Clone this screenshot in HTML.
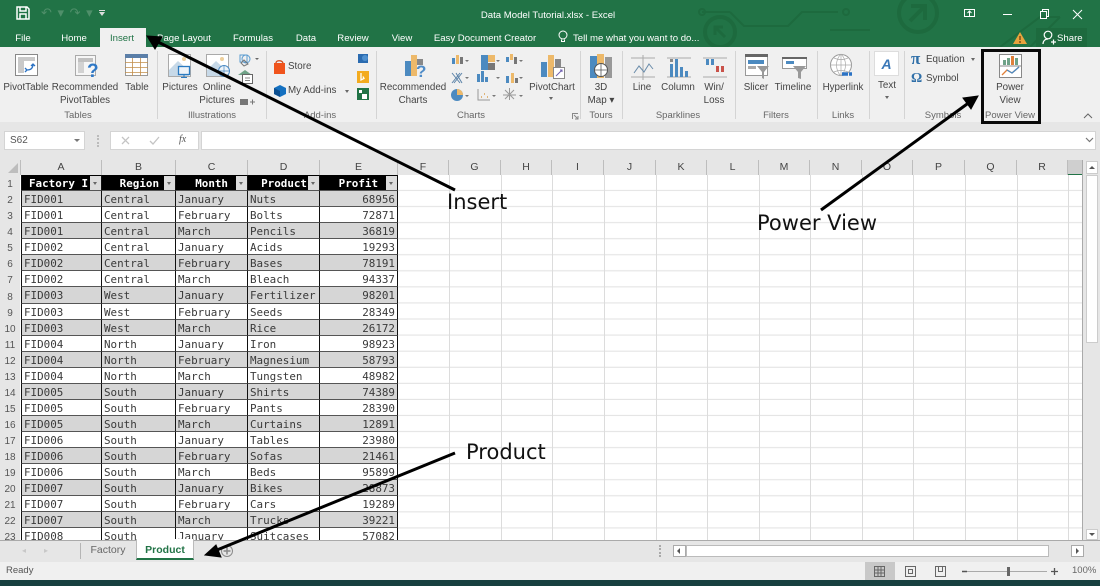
<!DOCTYPE html>
<html><head><meta charset="utf-8"><style>
html,body{margin:0;padding:0;width:1100px;height:586px;overflow:hidden;background:#fff}
body{position:relative;font-family:"Liberation Sans",sans-serif;font-size:9.8px;color:#444}
.a{position:absolute}
.t{position:absolute;transform:translateX(-50%);white-space:nowrap;line-height:13px;text-align:center}
.g{position:absolute;top:110px;transform:translateX(-50%);white-space:nowrap;line-height:12px;color:#666;font-size:9.5px}
.w{color:#fff;font-size:9.6px;line-height:13px;top:32px}
.sep{position:absolute;top:51px;height:68px;width:1px;background:#d4d4d4}
.col{position:absolute;top:160px;height:15px;line-height:15px;text-align:center;color:#444;font-size:10.5px;background:#e6e6e6;border-right:1px solid #bdbdbd;box-sizing:border-box}
.rh{position:absolute;left:0;width:20px;text-align:center;color:#555;font-size:10px;height:16px;line-height:19px}
.grid{position:absolute;left:21px;top:175px;width:378px;height:365px;overflow:hidden}
.gi{display:grid;grid-template-columns:81px 74px 72px 72px 78px;grid-auto-rows:16.07px;font-family:"DejaVu Sans Mono",monospace;font-size:10.9px;color:#3a3a3a}
.r{display:contents}
.r>span{display:block;border-right:1px solid #111;border-bottom:1px solid #555;box-sizing:border-box;padding-left:2px;line-height:18px;white-space:nowrap;overflow:hidden;background:#fff}
.r:nth-child(even)>span{background:#d6d6d6}
.r>span:first-child{border-left:1px solid #111}
.r>span:last-child{text-align:right;padding-right:2px}
.h>span{background:#000!important;color:#fff;font-weight:bold;position:relative;text-align:right;padding:0!important;font-size:10.9px;line-height:17px}
.h>span:nth-child(1){padding-right:13px!important}
.h>span:nth-child(2){padding-right:16px!important}
.h>span:nth-child(3){padding-right:19px!important}
.h>span:nth-child(4){padding-right:12px!important}
.h>span:nth-child(5){padding-right:19px!important;text-align:right}
.h>span i{position:absolute;right:0;top:1px;width:11px;height:14px;background:#dcdcdc}
.h>span i:after{content:"";position:absolute;left:3px;top:6px;border:2.500px solid transparent;border-top:3px solid #666;border-bottom:0}
</style></head><body>
<div class="a" style="left:0;top:0;width:1100px;height:47px;background:#217346"></div>
<svg class="a" style="left:0;top:0" width="1100" height="47" fill="none" stroke="#1d6a3e" stroke-width="2">
<circle cx="918" cy="13" r="19" stroke-width="4"/><path d="M910 21l15-15M911 6h14v14" stroke-width="4"/>
<circle cx="720" cy="32" r="15" stroke-width="4"/><path d="M715 27l10 10M715 35v-8h8" stroke-width="3"/>
<path d="M702 12h28M730 12l14 14h44l14-14h36M830 30h40M1000 47l40-30h20M1030 47l30-30"/><circle cx="702" cy="12" r="3"/><circle cx="846" cy="12" r="3"/>
</svg>
<svg class="a" style="left:16px;top:6px" width="14" height="14" fill="none" stroke="#fff" stroke-width="1.500"><path d="M1 1h10l2 2v10H1zM4 1v4h6V1M4 13V8h6v5"/></svg>
<div class="a" style="left:41px;top:5px;color:#4f8f6a;font-size:13px;line-height:15px;letter-spacing:1px">↶ ▾ ↷ ▾</div>
<div class="a" style="left:99px;top:10px;width:6px;height:1px;background:#ddd"></div>
<div class="a" style="left:99px;top:12px;border:3px solid transparent;border-top:4px solid #ddd;border-bottom:0"></div>
<div class="t" style="left:548px;top:9px;color:#fff;font-size:9.6px">Data Model Tutorial.xlsx - Excel</div>
<svg class="a" style="left:960px;top:6px" width="130" height="16" fill="none" stroke="#fff"><rect x="4.500" y="3.500" width="10" height="7"/><path d="M9.500 10V5M7.500 7l2-2 2 2"/><path d="M43 8.500h9"/><rect x="80.500" y="5.500" width="6" height="7"/><path d="M82.500 5V3.500h6v7H87M113 4l9 9M122 4l-9 9"/></svg>

<div class="a" style="left:100px;top:28px;width:46px;height:20px;background:#f0f0f0"></div>
<div class="t w" style="left:23px">File</div>
<div class="t w" style="left:74px">Home</div>
<div class="t w" style="left:122px;color:#217346">Insert</div>
<div class="t w" style="left:184px">Page Layout</div>
<div class="t w" style="left:253px">Formulas</div>
<div class="t w" style="left:306px">Data</div>
<div class="t w" style="left:353px">Review</div>
<div class="t w" style="left:402px">View</div>
<div class="t w" style="left:485px">Easy Document Creator</div>
<svg class="a" style="left:557px;top:30px" width="12" height="14" fill="none" stroke="#fff"><circle cx="6" cy="5" r="4"/><path d="M4.500 9.500v2h3v-2"/></svg>
<div class="a w" style="left:573px;white-space:nowrap">Tell me what you want to do...</div>
<svg class="a" style="left:1013px;top:32px" width="14" height="12"><path d="M7 0l7 12H0z" fill="#e8a33d"/><path d="M7 4v4M7 9v2" stroke="#5a3a10" stroke-width="1.200"/></svg>
<div class="a" style="left:1036px;top:28px;width:51px;height:19px;background:#1d6a3e"></div>
<svg class="a" style="left:1042px;top:30px" width="14" height="15" fill="none" stroke="#fff" stroke-width="1.200"><circle cx="6" cy="5" r="3.800"/><path d="M1 14c0-3 2-5 5-5M9 12h5M11.500 9.500v5"/></svg>
<div class="a w" style="left:1057px;white-space:nowrap">Share</div>

<div class="a" style="left:0;top:47px;width:1100px;height:75px;background:#f0f0f0"></div>
<div class="a" style="left:0;top:122px;width:1100px;height:38px;background:#e6e6e6"></div>
<div class="sep" style="left:157px"></div><div class="sep" style="left:266px"></div><div class="sep" style="left:376px"></div><div class="sep" style="left:580px"></div><div class="sep" style="left:622px"></div><div class="sep" style="left:735px"></div><div class="sep" style="left:817px"></div><div class="sep" style="left:869px"></div><div class="sep" style="left:904px"></div>

<svg class="a" style="left:0;top:47px" width="1100" height="62" fill="none">
<rect x="15.500" y="7.500" width="22" height="21" fill="#fff" stroke="#888"/><rect x="18" y="10" width="6" height="16" fill="#c9c9c9"/><rect x="18" y="10" width="17" height="4" fill="#c9c9c9"/><path d="M27 23c4 0 6-2 6-6M25 21l2 2-2 2M31 19l2-2 2 2" stroke="#2b72c4" stroke-width="1.300"/>
<rect x="75.500" y="8.500" width="20" height="20" fill="#f6f6f6" stroke="#aaa"/><rect x="78" y="11" width="6" height="15" fill="#d2d2d2"/><rect x="78" y="11" width="15" height="4" fill="#c0c0c0"/><text x="87" y="30" font-family="Liberation Sans" font-size="19" font-weight="bold" fill="#2f78c6">?</text>
<rect x="125.500" y="7.500" width="22" height="21" fill="#fff" stroke="#999"/><rect x="125" y="7" width="23" height="4" fill="#5b7fa8"/><path d="M125 15.500h23M125 20.500h23M125 25.500h23M132.500 11v18M140.500 11v18" stroke="#c28e4a" stroke-width=".8"/>
<rect x="168.500" y="7.500" width="22" height="22" fill="#fff" stroke="#aaa"/><path d="M169 29v-6l9-9 11 10v5z" fill="#c7d9e8"/><circle cx="184" cy="12" r="2" fill="#edcf9c"/><rect x="178.500" y="19.500" width="11" height="8" fill="#eef3f8" stroke="#2a7ac0" stroke-width="1.300"/><path d="M184 28v2M181 30.500h6" stroke="#2a7ac0"/>
<rect x="206.500" y="7.500" width="22" height="22" fill="#fff" stroke="#aaa"/><path d="M207 29v-6l9-9 11 10v5z" fill="#c7d9e8"/><circle cx="222" cy="12" r="2" fill="#edcf9c"/><circle cx="224" cy="24" r="5.500" fill="#eef3f8" stroke="#4a8ac4"/><path d="M218.500 24h11M224 18.500v11" stroke="#4a8ac4" stroke-width=".7"/>
<rect x="240" y="8" width="7" height="7" stroke="#5a9bd0"/><circle cx="246" cy="12" r="4" stroke="#5a9bd0"/><path d="M244 13l4 4-4 2-3-3z" stroke="#777"/><path d="M255 11h4l-2 2z" fill="#666"/>
<path d="M238 28l7-5 7 5z" fill="#6fa287"/><rect x="242.500" y="27.500" width="10" height="9" fill="#fff" stroke="#666"/><path d="M245 31h5M245 33.500h5" stroke="#888"/>
<rect x="240" y="52" width="8" height="6" fill="#777"/><path d="M250 55h5M252.500 52.500v5" stroke="#777"/>
<rect x="274" y="16" width="11" height="11" fill="#f0541c"/><path d="M276 16c0-3 6-3 7 0" stroke="#d04818" stroke-width="1.300"/>
<path d="M280 38l6 3v6l-6 3-6-3v-6z" fill="#1470c0"/><path d="M280 44v6l-6-3v-6z" fill="#0c4f90"/>
<rect x="358" y="7" width="10" height="9" fill="#2b6bb0"/><circle cx="365" cy="11" r="3" fill="#4f90cf"/>
<rect x="357" y="24" width="12" height="12" fill="#f3ab1f"/><path d="M361 26v7l3-1.500-1-2" stroke="#fff" stroke-width="1.300"/>
<rect x="357" y="41" width="12" height="12" fill="#217346"/><rect x="359" y="43" width="3" height="3" fill="#fff"/><rect x="362" y="47" width="5" height="5" fill="#fff"/>
<rect x="405" y="14" width="6" height="15" fill="#4c8ac0"/><rect x="411" y="8" width="6" height="21" fill="#edb96a"/><rect x="417" y="12" width="6" height="6" fill="#888"/><text x="416" y="30" font-family="Liberation Sans" font-size="17" font-weight="bold" fill="#4f8cc8">?</text>
<g fill="#4c8ac0"><rect x="452" y="11" width="3" height="6"/><rect x="481" y="8" width="7" height="15"/><rect x="477" y="27" width="3" height="8"/><rect x="481" y="24" width="3" height="11"/><rect x="485" y="30" width="3" height="5"/><rect x="506" y="10" width="3" height="5"/><rect x="506" y="29" width="3" height="7"/></g>
<g fill="#edb96a"><rect x="456" y="8" width="3" height="9"/><rect x="488" y="8" width="7" height="7"/><rect x="510" y="7" width="3" height="6"/><rect x="511" y="26" width="3" height="10"/></g>
<g fill="#777"><rect x="460" y="10" width="3" height="7"/><rect x="488" y="16" width="7" height="7"/><rect x="514" y="10" width="3" height="7"/><rect x="515" y="31" width="3" height="5"/></g>
<path d="M452 26l8 10M460 26l-8 10M456 26l6 10M462 26l-8 10" stroke="#5a82a8"/>
<circle cx="457" cy="48" r="6" fill="#4c8ac0"/><path d="M457 48v-6a6 6 0 0 1 6 6z" fill="#edb96a"/>
<path d="M478 42v11h12" stroke="#999"/><path d="M481 50h1M484 47h1M487 50h1" stroke="#d9a050" stroke-width="1.500"/>
<path d="M505 43l9 9M514 43l-9 9M509.500 41v12M503 48h13" stroke="#999"/>
<g fill="#777"><path d="M465 13h4l-2 2zM496 13h4l-2 2zM519 13h4l-2 2zM465 30h4l-2 2zM496 30h4l-2 2zM519 30h4l-2 2zM465 48h4l-2 2zM492 48h4l-2 2zM519 48h4l-2 2z"/></g>
<rect x="541" y="15" width="6" height="15" fill="#4c8ac0"/><rect x="548" y="8" width="6" height="22" fill="#edb96a"/><rect x="555" y="12" width="6" height="8" fill="#888"/><rect x="553.500" y="20.500" width="11" height="11" fill="#fff" stroke="#888"/><path d="M556 29l6-6M560 23h2v2" stroke="#7060b0"/>
<rect x="590" y="9" width="7" height="22" fill="#4c8ac0"/><rect x="597" y="7" width="7" height="24" fill="#edb96a"/><rect x="605" y="10" width="7" height="21" fill="#999"/><circle cx="601" cy="23" r="6.500" fill="#fff" stroke="#555"/><path d="M594.500 23h13M601 16.500v13" stroke="#555" stroke-width=".8"/>
<path d="M631 11h24M631 30h24M643 8v25" stroke="#aaa"/><path d="M634 26l5-7 5 6 5-8 4 5" stroke="#6a8caa"/>
<path d="M667 11h24M667 30h24" stroke="#aaa"/><g fill="#4c8ac0"><rect x="670" y="12" width="3" height="3" fill="#888"/><rect x="670" y="17" width="3" height="13"/><rect x="675" y="12" width="3" height="18"/><rect x="680" y="20" width="3" height="10"/><rect x="685" y="24" width="3" height="6"/></g>
<path d="M703 11h24M703 30h24" stroke="#aaa"/><g><rect x="706" y="12" width="3" height="6" fill="#4c8ac0"/><rect x="711" y="12" width="3" height="6" fill="#4c8ac0"/><rect x="716" y="19" width="3" height="6" fill="#c9524a"/><rect x="721" y="19" width="3" height="6" fill="#c9524a"/></g>
<rect x="745.500" y="7.500" width="22" height="21" fill="#fff" stroke="#999"/><rect x="745" y="7" width="23" height="3" fill="#666"/><rect x="748" y="13" width="16" height="4" fill="#4c8ac0"/><rect x="748" y="19" width="8" height="3" fill="#aaa"/><path d="M757 19h12l-5 6v7l-2-1v-6z" fill="#999"/>
<rect x="782.500" y="10.500" width="24" height="11" fill="#fff" stroke="#999"/><rect x="782" y="10" width="25" height="2" fill="#666"/><rect x="786" y="14" width="8" height="3" fill="#4c8ac0"/><path d="M793 19h13l-5 6v7l-3-1v-6z" fill="#999"/>
<circle cx="841" cy="18" r="10.500" fill="#fff" stroke="#999"/><path d="M830 18h22M841 8v21M834 11c4 2 10 2 14 0M834 25c4-2 10-2 14 0M841 7c-6 6-6 16 0 22M841 7c6 6 6 16 0 22" stroke="#aaa" stroke-width=".7"/><path d="M842 27h6M849 27h3" stroke="#2b72c4" stroke-width="3.500"/>
<rect x="874.500" y="4.500" width="24" height="24" fill="#fff" stroke="#ddd"/><text x="886.500" y="22" text-anchor="middle" font-family="Liberation Sans" font-size="14" font-style="italic" font-weight="bold" fill="#3a78b8">A</text>
<rect x="999.500" y="7.500" width="22" height="23" fill="#fff" stroke="#888"/><path d="M999 19h23" stroke="#888"/><rect x="1003" y="13" width="3" height="5" fill="#6fa287"/><rect x="1007" y="11" width="3" height="7" fill="#6fa287"/><rect x="1011" y="9" width="3" height="9" fill="#e0803a"/><rect x="1015" y="11" width="3" height="7" fill="#6fa287"/><path d="M1002 28l5-5 5 3 7-6" stroke="#e0803a" stroke-width="1.300"/><path d="M1007 23l5 3 7-6" stroke="#4a8ac4" stroke-width="1.300"/>
</svg>
<svg class="a" style="left:1083px;top:112px" width="10" height="7" fill="none" stroke="#666"><path d="M1 6l4-4 4 4"/></svg>
<svg class="a" style="left:572px;top:113px" width="7" height="7" fill="none" stroke="#888"><path d="M.5 6V.5H6M2 2l4 4M3 6h3V3"/></svg>

<div class="t" style="left:26px;top:80.500px">PivotTable</div>
<div class="t" style="left:85px;top:80.500px">Recommended<br>PivotTables</div>
<div class="t" style="left:137px;top:80.500px">Table</div>
<div class="t" style="left:180px;top:80.500px">Pictures</div>
<div class="t" style="left:217px;top:80.500px">Online<br>Pictures</div>
<div class="a" style="left:288px;top:60px;line-height:13px;white-space:nowrap">Store</div>
<div class="a" style="left:288px;top:84px;line-height:13px;white-space:nowrap">My Add-ins</div>
<div class="a" style="left:345px;top:90px;border:2.500px solid transparent;border-top:3px solid #666;border-bottom:0"></div>
<div class="t" style="left:413px;top:80.500px">Recommended<br>Charts</div>
<div class="t" style="left:552px;top:80.500px">PivotChart</div>
<div class="a" style="left:549px;top:97px;border:2.500px solid transparent;border-top:3px solid #666;border-bottom:0"></div>
<div class="t" style="left:601px;top:80.500px">3D<br>Map ▾</div>
<div class="t" style="left:642px;top:80.500px">Line</div>
<div class="t" style="left:678px;top:80.500px">Column</div>
<div class="t" style="left:714px;top:80.500px">Win/<br>Loss</div>
<div class="t" style="left:756px;top:80.500px">Slicer</div>
<div class="t" style="left:793px;top:80.500px">Timeline</div>
<div class="t" style="left:843px;top:80.500px">Hyperlink</div>
<div class="t" style="left:887px;top:78.500px">Text</div>
<div class="a" style="left:885px;top:96px;border:2.500px solid transparent;border-top:3px solid #666;border-bottom:0"></div>
<div class="a" style="left:911px;top:51px;color:#2f6fa8;font:bold 17px/16px 'Liberation Serif',serif">π</div>
<div class="a" style="left:926px;top:53px;line-height:13px;white-space:nowrap">Equation</div>
<div class="a" style="left:971px;top:58px;border:2.500px solid transparent;border-top:3px solid #666;border-bottom:0"></div>
<div class="a" style="left:911px;top:71px;color:#2f6fa8;font:bold 14px/16px 'Liberation Serif',serif">Ω</div>
<div class="a" style="left:926px;top:72px;line-height:13px;white-space:nowrap">Symbol</div>
<div class="t" style="left:1010px;top:80.500px">Power<br>View</div>

<div class="g" style="left:78px">Tables</div>
<div class="g" style="left:212px">Illustrations</div>
<div class="g" style="left:320px">Add-ins</div>
<div class="g" style="left:471px">Charts</div>
<div class="g" style="left:601px">Tours</div>
<div class="g" style="left:678px">Sparklines</div>
<div class="g" style="left:776px">Filters</div>
<div class="g" style="left:843px">Links</div>
<div class="g" style="left:943px">Symbols</div>
<div class="g" style="left:1010px">Power View</div>
<div class="a" style="left:981px;top:49px;width:60px;height:75px;border:3px solid #0a0a0a;box-sizing:border-box"></div>

<div class="a" style="left:4px;top:131px;width:81px;height:19px;background:#fff;border:1px solid #d4d4d4;box-sizing:border-box;line-height:18px;padding-left:5px;color:#555;font-size:10px">S62</div>
<div class="a" style="left:74px;top:139px;border:3px solid transparent;border-top:3px solid #777;border-bottom:0"></div>
<div class="a" style="left:97px;top:135px;width:2px;height:12px;border-left:2px dotted #bbb"></div>
<div class="a" style="left:110px;top:131px;width:89px;height:19px;background:#fff;border:1px solid #d4d4d4;box-sizing:border-box"></div>
<svg class="a" style="left:120px;top:134px" width="40" height="13" fill="none" stroke="#c4c4c4" stroke-width="1.300"><path d="M2 3l7 7M9 3l-7 7M30 7l3 3 6-7"/></svg>
<div class="a" style="left:179px;top:133px;font:italic 10px/14px 'Liberation Serif',serif;color:#555">fx</div>
<div class="a" style="left:201px;top:131px;width:895px;height:19px;background:#fff;border:1px solid #d4d4d4;box-sizing:border-box"></div>
<svg class="a" style="left:1085px;top:137px" width="9" height="6" fill="none" stroke="#777" stroke-width="1.200"><path d="M1 1l3.500 3.500L8 1"/></svg>

<div class="a" style="left:0;top:160px;width:1100px;height:380px;background:#fff"></div>
<div class="a" style="left:0;top:160px;width:20px;height:380px;background:#e6e6e6"></div>
<div class="a" style="left:0;top:160px;width:21px;height:15px;background:#e6e6e6;border-right:1px solid #bdbdbd;box-sizing:border-box"></div>
<div class="a" style="left:8px;top:163px;border-style:solid;border-width:0 0 10px 10px;border-color:transparent transparent #bdbdbd transparent"></div>
<svg class="a" style="left:21px;top:175px" width="1061" height="365"><defs><pattern id="p" width="1061" height="16.070" patternUnits="userSpaceOnUse"><path d="M0 15.500h1061" stroke="#e0e0e0"/></pattern></defs><rect width="1061" height="365" fill="url(#p)"/>
<path d="M428.500 0v365M480.500 0v365M531.500 0v365M583.500 0v365M635.500 0v365M686.500 0v365M738.500 0v365M789.500 0v365M841.500 0v365M892.500 0v365M944.500 0v365M996.500 0v365M1047.500 0v365" stroke="#dcdcdc"/></svg>

<div class="col" style="left:21px;width:81px">A</div><div class="col" style="left:102px;width:74px">B</div><div class="col" style="left:176px;width:72px">C</div><div class="col" style="left:248px;width:72px">D</div><div class="col" style="left:320px;width:78px">E</div><div class="col" style="left:398px;width:51px">F</div><div class="col" style="left:449px;width:52px">G</div><div class="col" style="left:501px;width:51px">H</div><div class="col" style="left:552px;width:52px">I</div><div class="col" style="left:604px;width:52px">J</div><div class="col" style="left:656px;width:51px">K</div><div class="col" style="left:707px;width:52px">L</div><div class="col" style="left:759px;width:51px">M</div><div class="col" style="left:810px;width:52px">N</div><div class="col" style="left:862px;width:51px">O</div><div class="col" style="left:913px;width:52px">P</div><div class="col" style="left:965px;width:52px">Q</div><div class="col" style="left:1017px;width:51px">R</div>
<div class="a" style="left:1068px;top:160px;width:14px;height:15px;background:#cfcfcf;border-bottom:1px solid #217346;box-sizing:border-box"></div>

<div class="rh" style="top:175px">1</div><div class="rh" style="top:191px">2</div><div class="rh" style="top:207px">3</div><div class="rh" style="top:223px">4</div><div class="rh" style="top:239px">5</div><div class="rh" style="top:255px">6</div><div class="rh" style="top:271px">7</div><div class="rh" style="top:288px">8</div><div class="rh" style="top:304px">9</div><div class="rh" style="top:320px">10</div><div class="rh" style="top:336px">11</div><div class="rh" style="top:352px">12</div><div class="rh" style="top:368px">13</div><div class="rh" style="top:384px">14</div><div class="rh" style="top:400px">15</div><div class="rh" style="top:416px">16</div><div class="rh" style="top:432px">17</div><div class="rh" style="top:448px">18</div><div class="rh" style="top:464px">19</div><div class="rh" style="top:480px">20</div><div class="rh" style="top:496px">21</div><div class="rh" style="top:512px">22</div><div class="rh" style="top:528px;height:12px;overflow:hidden">23</div>

<div class="grid"><div class="gi">
<div class="r h"><span>Factory I<i></i></span><span>Region<i></i></span><span>Month<i></i></span><span>Product<i></i></span><span>Profit<i></i></span></div>
<div class="r"><span>FID001</span><span>Central</span><span>January</span><span>Nuts</span><span>68956</span></div>
<div class="r"><span>FID001</span><span>Central</span><span>February</span><span>Bolts</span><span>72871</span></div>
<div class="r"><span>FID001</span><span>Central</span><span>March</span><span>Pencils</span><span>36819</span></div>
<div class="r"><span>FID002</span><span>Central</span><span>January</span><span>Acids</span><span>19293</span></div>
<div class="r"><span>FID002</span><span>Central</span><span>February</span><span>Bases</span><span>78191</span></div>
<div class="r"><span>FID002</span><span>Central</span><span>March</span><span>Bleach</span><span>94337</span></div>
<div class="r"><span>FID003</span><span>West</span><span>January</span><span>Fertilizer</span><span>98201</span></div>
<div class="r"><span>FID003</span><span>West</span><span>February</span><span>Seeds</span><span>28349</span></div>
<div class="r"><span>FID003</span><span>West</span><span>March</span><span>Rice</span><span>26172</span></div>
<div class="r"><span>FID004</span><span>North</span><span>January</span><span>Iron</span><span>98923</span></div>
<div class="r"><span>FID004</span><span>North</span><span>February</span><span>Magnesium</span><span>58793</span></div>
<div class="r"><span>FID004</span><span>North</span><span>March</span><span>Tungsten</span><span>48982</span></div>
<div class="r"><span>FID005</span><span>South</span><span>January</span><span>Shirts</span><span>74389</span></div>
<div class="r"><span>FID005</span><span>South</span><span>February</span><span>Pants</span><span>28390</span></div>
<div class="r"><span>FID005</span><span>South</span><span>March</span><span>Curtains</span><span>12891</span></div>
<div class="r"><span>FID006</span><span>South</span><span>January</span><span>Tables</span><span>23980</span></div>
<div class="r"><span>FID006</span><span>South</span><span>February</span><span>Sofas</span><span>21461</span></div>
<div class="r"><span>FID006</span><span>South</span><span>March</span><span>Beds</span><span>95899</span></div>
<div class="r"><span>FID007</span><span>South</span><span>January</span><span>Bikes</span><span>28873</span></div>
<div class="r"><span>FID007</span><span>South</span><span>February</span><span>Cars</span><span>19289</span></div>
<div class="r"><span>FID007</span><span>South</span><span>March</span><span>Trucks</span><span>39221</span></div>
<div class="r"><span>FID008</span><span>South</span><span>January</span><span>Suitcases</span><span>57082</span></div>
</div></div>

<div class="a" style="left:1082px;top:160px;width:18px;height:380px;background:#e6e6e6;border-left:1px solid #aaa;box-sizing:border-box"></div>
<div class="a" style="left:1086px;top:161px;width:12px;height:13px;background:#fff;border:1px solid #ccc;box-sizing:border-box"></div>
<div class="a" style="left:1089px;top:166px;border:3px solid transparent;border-bottom:3px solid #555;border-top:0"></div>
<div class="a" style="left:1086px;top:175px;width:12px;height:168px;background:#fff;border:1px solid #ccc;box-sizing:border-box"></div>
<div class="a" style="left:1086px;top:529px;width:12px;height:11px;background:#fff;border:1px solid #ccc;box-sizing:border-box"></div>
<div class="a" style="left:1089px;top:533px;border:3px solid transparent;border-top:3px solid #555;border-bottom:0"></div>

<div class="a" style="left:0;top:540px;width:1100px;height:22px;background:#e6e6e6;border-top:1px solid #aaa;box-sizing:border-box"></div>
<div class="a" style="left:22px;top:546px;color:#c8c8c8;font-size:8px;line-height:10px">◂</div>
<div class="a" style="left:44px;top:546px;color:#c8c8c8;font-size:8px;line-height:10px">▸</div>
<div class="a" style="left:80px;top:543px;width:1px;height:16px;background:#b5b5b5"></div>
<div class="t" style="left:108px;top:544px;font-size:10.500px;color:#666">Factory</div>
<div class="a" style="left:136px;top:539px;width:58px;height:21px;background:#fff;border-bottom:2px solid #217346;border-left:1px solid #bbb;border-right:1px solid #bbb;box-sizing:border-box"></div>
<div class="t" style="left:165px;top:544px;font-size:10.500px;font-weight:bold;color:#217346">Product</div>
<svg class="a" style="left:220px;top:544px" width="14" height="14" fill="none" stroke="#8a8a8a"><circle cx="7" cy="7" r="5.500"/><path d="M7 3.500v7M3.500 7h7" stroke-width="1.500"/></svg>
<div class="a" style="left:659px;top:545px;height:12px;border-left:2px dotted #aaa"></div>
<div class="a" style="left:673px;top:545px;width:13px;height:12px;background:#fff;border:1px solid #aaa;box-sizing:border-box"></div>
<div class="a" style="left:677px;top:548px;border:3px solid transparent;border-right:3px solid #555;border-left:0"></div>
<div class="a" style="left:686px;top:545px;width:363px;height:12px;background:#fff;border:1px solid #bbb;box-sizing:border-box"></div>
<div class="a" style="left:1071px;top:545px;width:13px;height:12px;background:#fff;border:1px solid #aaa;box-sizing:border-box"></div>
<div class="a" style="left:1076px;top:548px;border:3px solid transparent;border-left:3px solid #555;border-right:0"></div>

<div class="a" style="left:0;top:562px;width:1100px;height:18px;background:#f0f0f0"></div>
<div class="a" style="left:6px;top:565px;font-size:9.500px;line-height:12px;color:#555">Ready</div>
<div class="a" style="left:865px;top:562px;width:30px;height:18px;background:#c8c8c8"></div>
<svg class="a" style="left:870px;top:563px" width="195" height="16" fill="none" stroke="#666"><path d="M4.500 3.500h10v10h-10zM4.500 7h10M4.500 10h10M8 3.500v10M11 3.500v10"/><path d="M35.500 3.500h10v10h-10zM38.500 6.500h4v4h-4z"/><path d="M65.500 3.500h10v10h-10zM68.500 3.500v5h4v-5"/><path d="M92 8.500h5M97 8.500h80" stroke="#aaa"/><path d="M92 8.500h5" stroke="#555" stroke-width="1.500"/><rect x="137" y="4" width="3" height="9" fill="#666" stroke="none"/><path d="M181 8.500h7M184.500 5v7" stroke="#555" stroke-width="1.300"/></svg>
<div class="a" style="left:1072px;top:565px;font-size:9.500px;line-height:12px;color:#666">100%</div>
<div class="a" style="left:0;top:580px;width:1100px;height:6px;background:#17403f"></div>

<svg class="a" style="left:0;top:0" width="1100" height="586" fill="none" stroke="#000" stroke-width="3">
<path d="M455 190L152 39"/><path d="M147 36l15 1-7 12z" fill="#000" stroke-width="1"/>
<path d="M821 210L974 99"/><path d="M978 96l-7 13-8-11z" fill="#000" stroke-width="1"/>
<path d="M455 453L212 552"/><path d="M205 555l11-10 5 12z" fill="#000" stroke-width="1"/>
</svg>
<div class="a" style="left:447px;top:189px;font-family:'DejaVu Sans',sans-serif;font-size:21px;line-height:27px;color:#111">Insert</div>
<div class="a" style="left:757px;top:210px;font-family:'DejaVu Sans',sans-serif;font-size:21px;line-height:27px;color:#111;white-space:nowrap">Power View</div>
<div class="a" style="left:466px;top:439px;font-family:'DejaVu Sans',sans-serif;font-size:21px;line-height:27px;color:#111">Product</div>
</body></html>
